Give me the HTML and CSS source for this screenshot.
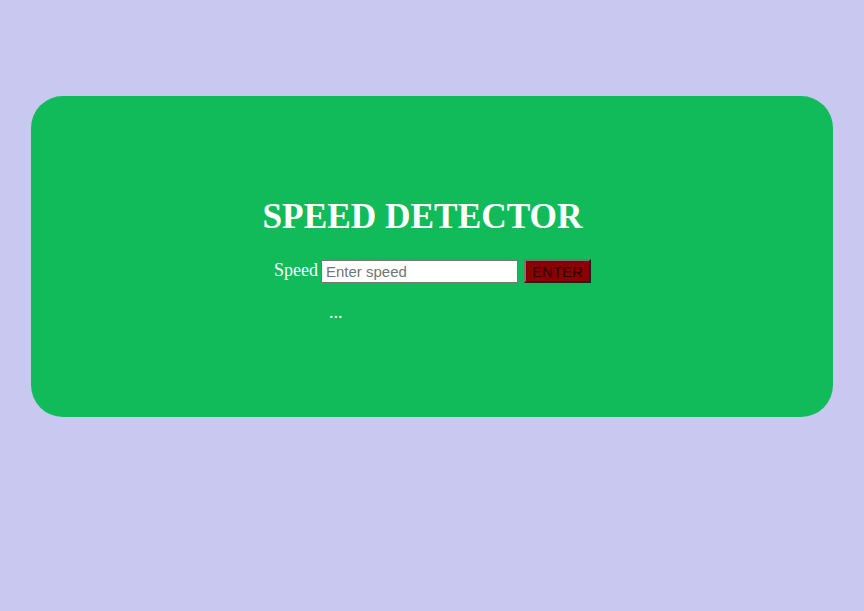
FILE: index.html
```html
<!DOCTYPE html>
<html>
<head>
<meta charset="utf-8">
<title>Speed Detector</title>
<link rel="stylesheet" href="styles.css">
</head>
<body>
<div class="card">
  <h1 class="title">SPEED DETECTOR</h1>
  <div class="panel">
    <div class="row">
      <label class="label" for="speed">Speed</label>
      <input class="input" id="speed" type="text" placeholder="Enter speed">
      <button class="btn" type="button">ENTER</button>
    </div>
    <p class="result">...</p>
  </div>
</div>
</body>
</html>
```

FILE: styles.css
```css
html, body {
  margin: 0;
  padding: 0;
}
body {
  background: #c9c8f0;
  font-family: "Liberation Serif", "Times New Roman", serif;
  height: 611px;
  overflow: hidden;
}
.card {
  margin: 96px 31px 0;
  height: 321px;
  box-sizing: border-box;
  padding-top: 101px;
  background: #12bb5a;
  border-radius: 32px;
  color: #ffffff;
}
.title {
  margin: 0;
  font-size: 35.3px;
  line-height: 40px;
  font-weight: bold;
  text-align: center;
  padding-right: 19px;
}
.panel {
  width: 318px;
  margin: 22px 0 0 243px;
}
.row {
  display: flex;
  align-items: center;
  height: 24px;
}
.label {
  font-size: 18px;
  line-height: 21px;
  margin-right: 3px;
  margin-bottom: 1px;
}
.input {
  box-sizing: border-box;
  width: 197px;
  height: 23px;
  margin: 0;
  padding: 0 4px;
  border: 1px solid #767676;
  font-family: "Liberation Sans", Arial, sans-serif;
  font-size: 15px;
  background: #fff;
  color: #000;
}
.input::placeholder {
  color: #757575;
}
.btn {
  box-sizing: border-box;
  width: 67px;
  height: 24px;
  margin: 0 0 0 6px;
  padding: 0;
  border: 2px outset #767676;
  background: #8b0000;
  color: #2a0000;
  font-family: "Liberation Sans", Arial, sans-serif;
  font-size: 15px;
}
.result {
  margin: 19px 0 0;
  padding-left: 55px;
  font-size: 18px;
  line-height: 21px;
}
```
